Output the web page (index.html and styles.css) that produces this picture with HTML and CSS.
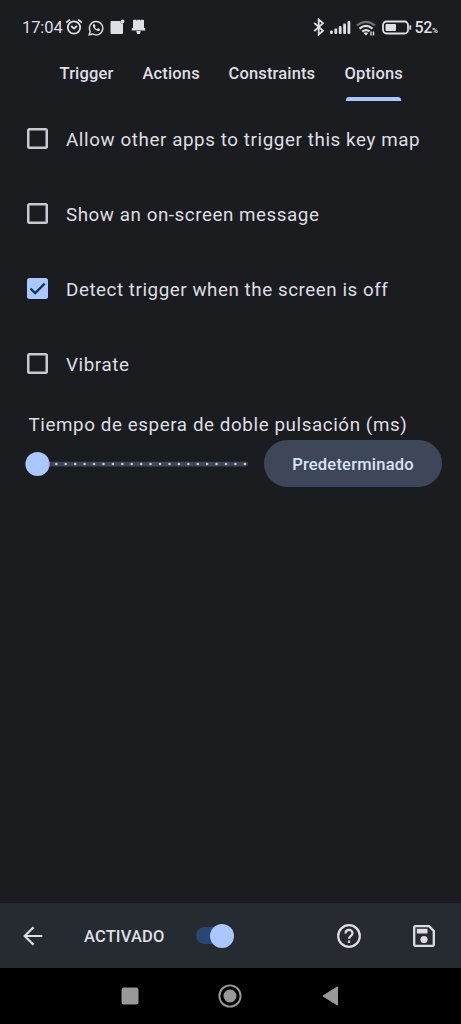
FILE: index.html
```html
<!DOCTYPE html>
<html lang="es">
<head>
<meta charset="utf-8">
<title>Options</title>
<link rel="stylesheet" href="styles.css">
</head>
<body>
<div class="screen">
  <header class="status">
    <span class="clock">17:04</span>
    <svg class="i-alarm" width="18" height="18" viewBox="0 0 18 18" fill="none" stroke="currentColor" stroke-width="1.8"><circle cx="9" cy="9.5" r="6.2"/><path d="M1.2 4.6 4.800 1.600M16.800 4.600 13.200 1.600M6.200 8l2.800 2.600L12 8"/></svg>
    <svg class="i-chat" width="16" height="16" viewBox="0 0 16 16" fill="none" stroke="currentColor" stroke-width="1.4"><path d="M1.200 14.800l1-3.500A6.700 6.700 0 1 1 4.800 14z"/><path d="M5.200 4.300c-1.600 2.600 3 7.600 6.300 6.600l.5-1.800-2-.9-1 .9C7.900 8.700 7.300 8 6.900 7.100l.7-.9-.8-1.900z" fill="currentColor" stroke="none"/></svg>
    <svg class="i-note" width="15" height="16" viewBox="0 0 15 16" fill="currentColor"><path d="M1.500 2h9a2 2 0 0 0 2.500 2.500V14a1 1 0 0 1-1 1H1.500a1 1 0 0 1-1-1V3a1 1 0 0 1 1-1z"/><circle cx="12.500" cy="2.500" r="1.900"/></svg>
    <svg class="i-bell" width="15" height="16" viewBox="0 0 15 16" fill="currentColor"><path d="M2.800.8h2.600v.8h.6V.8h3v.8h.6V.8h2.600a.8.800 0 0 1 .8.800V9H14.200v2.500H.8V9H2V1.600A.8.800 0 0 1 2.800.8zM5.300 12h4.400l-.8 3H6.100z"/></svg>
    <span class="grow"></span>
    <svg class="i-bt" width="12" height="18" viewBox="0 0 12 18" fill="none" stroke="currentColor" stroke-width="1.800"><path d="M1.200 4.800 10 12.800 5.700 16.500V1.500L10 5.200 1.200 13.200"/></svg>
    <svg class="i-signal" width="21" height="15" viewBox="0 0 21 15" fill="currentColor"><rect x="0" y="10.500" width="2.800" height="3.500" rx="1"/><rect x="4.400" y="8.500" width="2.800" height="5.500" rx="1"/><rect x="8.800" y="6" width="2.800" height="8" rx="1"/><rect x="13.200" y="3.500" width="2.800" height="10.500" rx="1"/><rect x="17.500" y="1" width="2.800" height="13" rx="1"/></svg>
    <svg class="i-wifi" width="20" height="16" viewBox="0 0 20 16" fill="none" stroke="currentColor" stroke-width="2.200"><path d="M1 5.500Q10-1.800 19 5.500" opacity=".45"/><path d="M3.500 8.600q6.500-5.500 13 0M6.300 11.600q3.700-3 7.200-.2"/><path d="M7.600 13q2.300-1.500 4.600 0L10 15.600z" fill="currentColor" stroke="none"/><path d="M15 11.500v4M17.500 11.500v4" stroke-width="1.400"/></svg>
    <svg class="i-battery" width="30" height="15" viewBox="0 0 30 15" fill="none" stroke="currentColor"><rect x="1" y="1.500" width="25" height="12" rx="3.500" stroke-width="1.800"/><rect x="3.500" y="4" width="10.500" height="7" rx="1" fill="currentColor" stroke="none"/><path d="M28.300 5.300v4.400" stroke-width="1.700"/></svg>
    <span class="percent">52<small>%</small></span>
  </header>

  <nav class="tabs">
    <span class="tab trigger">Trigger</span>
    <span class="tab actions">Actions</span>
    <span class="tab constraints">Constraints</span>
    <span class="tab options active">Options</span>
  </nav>

  <main class="content">
    <label class="row"><span class="box"></span><span class="text">Allow other apps to trigger this key map</span></label>
    <label class="row"><span class="box"></span><span class="text tight">Show an on-screen message</span></label>
    <label class="row"><span class="box checked"><svg width="21" height="21" viewBox="0 0 21 21" fill="none" stroke="#14315e" stroke-width="2.200"><path d="M3.500 10.600l4.700 4.500 9.500-9.500"/></svg></span><span class="text tight">Detect trigger when the screen is off</span></label>
    <label class="row"><span class="box"></span><span class="text">Vibrate</span></label>
    <div class="caption">Tiempo de espera de doble pulsación (ms)</div>
    <div class="slider-row">
      <svg class="slider" width="224" height="26" viewBox="0 0 224 26"><rect x="12" y="10.700" width="211" height="4.700" rx="2.300" fill="#3e4759"/><path d="M31.300 13h189" fill="none" stroke="#c3c6cf" stroke-width="2.600" stroke-linecap="round" stroke-dasharray="0 9.430"/><circle cx="12.500" cy="13" r="12.100" fill="#aac7ff"/></svg>
      <button class="default">Predeterminado</button>
    </div>
  </main>

  <footer class="appbar">
    <svg class="back" width="20" height="20" viewBox="0 0 20 20" fill="none" stroke="currentColor" stroke-width="2.200"><path d="M19.300 10H2M10.500 1.200 1.700 10l8.800 8.800"/></svg>
    <span class="enabled">ACTIVADO</span>
    <span class="switch"><span class="thumb"></span></span>
    <span class="grow"></span>
    <svg class="help" width="24" height="24" viewBox="0 0 24 24" fill="none" stroke="currentColor" stroke-width="2.200"><circle cx="12" cy="12" r="10.800"/><path d="M8.500 9.500C8.500 4.700 15.500 4.700 15.500 9.300c0 2.400-3.500 2.700-3.500 5.500M12 16.600v2.300"/></svg>
    <svg class="save" width="22" height="22" viewBox="0 0 22 22" fill="none" stroke="currentColor" stroke-width="2.300"><path d="M2.300 1.200H16L20.800 6v13.700a1.100 1.100 0 0 1-1.100 1.100H2.300a1.100 1.100 0 0 1-1.100-1.100V2.300a1.100 1.100 0 0 1 1.100-1.100z"/><path d="M3.800 3.800h10.700v4.700H3.800z" fill="currentColor" stroke="none"/><circle cx="11" cy="14.500" r="3.600" fill="currentColor" stroke="none"/></svg>
  </footer>

  <div class="system">
    <svg width="18" height="18" viewBox="0 0 18 18"><rect x=".5" y=".5" width="17" height="17" rx="2.500" fill="#999"/></svg>
    <svg width="24" height="24" viewBox="0 0 24 24"><circle cx="12" cy="12" r="10.600" fill="none" stroke="#999" stroke-width="1.900"/><circle cx="12" cy="12" r="6.500" fill="#999"/></svg>
    <svg width="17" height="20" viewBox="0 0 17 20"><path d="M15.500.8v18.400L.8 10z" fill="#999" stroke="#999" stroke-linejoin="round"/></svg>
  </div>
</div>
</body>
</html>
```
FILE: styles.css
```css
* { box-sizing: border-box; }
body { margin: 0; background: #1b1c20; font-family: Roboto, sans-serif; color: #dedfe4; }
svg { display: block; flex: none; }
.screen { width: 461px; height: 1024px; display: flex; flex-direction: column; overflow: hidden; }
.grow { flex: 1; }

.status { height: 54px; display: flex; align-items: center; padding: 0 21.500px 0 22px; white-space: nowrap; }
.clock { width: 42px; padding-top: 1px; font-size: 16.500px; letter-spacing: -.1px; }
.i-alarm { margin-left: 1px; }
.i-chat { margin-left: 5px; margin-top: 1px; }
.i-note { margin-left: 6px; }
.i-bell { margin-left: 6px; }
.i-signal { margin-left: 5px; }
.i-wifi { margin-left: 5px; margin-top: 1px; }
.i-battery { margin-left: 6px; }
.percent { width: 25px; margin-left: 3px; padding-top: 1px; font-size: 16px; font-weight: 500; letter-spacing: -.4px; }
.percent small { font-size: 8px; font-weight: 700; }

.tabs { height: 47px; display: flex; padding-left: 59.500px; font-size: 16.500px; font-weight: 500; letter-spacing: .15px; line-height: 39px; white-space: nowrap; }
.tab { flex: none; }
.trigger { width: 83px; }
.actions { width: 86px; }
.constraints { width: 116px; }
.options { width: 60px; }
.active { display: flex; flex-direction: column; justify-content: space-between; }
.active::after { content: ""; width: 55px; height: 4px; margin-left: 1.500px; border-radius: 3px 3px 0 0; background: #aac7ff; }

.content { flex: 1; font-size: 18.800px; letter-spacing: .59px; white-space: nowrap; }
.row { display: flex; align-items: center; gap: 18px; height: 75px; padding-left: 27px; }
.text { padding-top: 2px; }
.tight { letter-spacing: .55px; }
.box { width: 21px; height: 21px; flex: none; border-radius: 2.500px; box-shadow: inset 0 0 0 2.500px #c8cad2; }
.checked { box-shadow: none; background: #aac7ff; }
.caption { height: 39px; padding-left: 28.500px; line-height: 48px; }
.slider-row { display: flex; align-items: center; padding-left: 25px; gap: 15px; height: 47px; }
.default { width: 178px; height: 47px; padding: 2px 0 0; border: 0; border-radius: 24px; background: #3e4759; color: #dae2f9; font: 500 16.500px Roboto, sans-serif; letter-spacing: .22px; }

.appbar { height: 65px; display: flex; align-items: center; padding: 0 26px 0 23px; background: #262a31; }
.enabled { width: 112px; margin-left: 41px; padding-top: 2px; font-size: 16.500px; font-weight: 500; letter-spacing: .15px; }
.switch { width: 38px; height: 17px; display: flex; align-items: center; justify-content: flex-end; border-radius: 9px; background: #284777; }
.thumb { width: 24px; height: 24px; flex: none; border-radius: 50%; background: #aac7ff; }
.save { margin-left: 52px; }

.system { height: 56px; display: flex; align-items: center; gap: 79px; padding-left: 121px; background: #000; }
.system svg:last-child { margin-left: .5px; }
```
